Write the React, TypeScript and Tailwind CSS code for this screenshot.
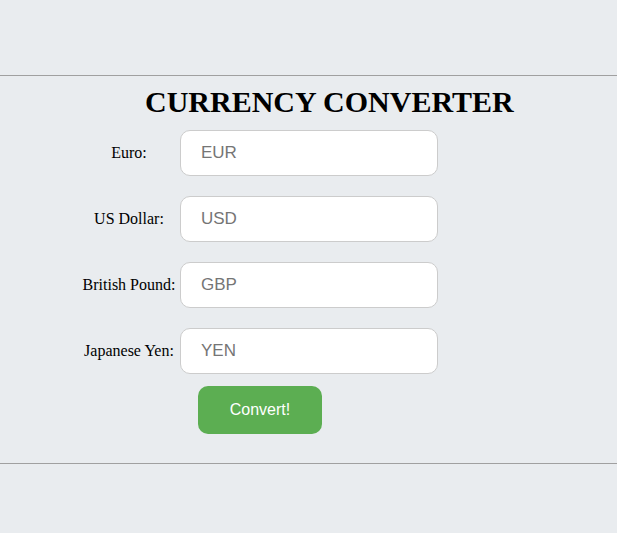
import React from 'react';

const fields = [
  { label: 'Euro:', placeholder: 'EUR' },
  { label: 'US Dollar:', placeholder: 'USD' },
  { label: 'British Pound:', placeholder: 'GBP' },
  { label: 'Japanese Yen:', placeholder: 'YEN' },
];

const App: React.FC = () => {
  return (
    <div className="min-h-screen bg-[#e9ecef] pt-[75px] font-['Liberation_Serif',serif] text-black">
      <hr className="border-0 border-t border-[#a0a0a0]" />
      <h1 className="mt-[8px] pl-[145px] text-[30px] font-bold leading-[36px]">CURRENCY CONVERTER</h1>
      <form className="mt-[10px] flex flex-col gap-5 pl-[78px]" onSubmit={(e) => e.preventDefault()}>
        {fields.map((f) => (
          <div key={f.label} className="flex items-center">
            <label className="w-[102px] text-center text-[16px]">{f.label}</label>
            <input
              type="text"
              placeholder={f.placeholder}
              className="h-[46px] w-[258px] rounded-[10px] border border-[#cccccc] bg-white px-5 font-['Liberation_Sans',sans-serif] text-[17px] placeholder:text-[#757575] outline-none"
            />
          </div>
        ))}
      </form>
      <div className="mt-3 pl-[198px]">
        <button className="h-12 w-[124px] rounded-[10px] bg-[#5cae52] font-['Liberation_Sans',sans-serif] text-[16px] text-white">
          Convert!
        </button>
      </div>
      <hr className="mt-[29px] border-0 border-t border-[#a0a0a0]" />
    </div>
  );
};

export default App;
